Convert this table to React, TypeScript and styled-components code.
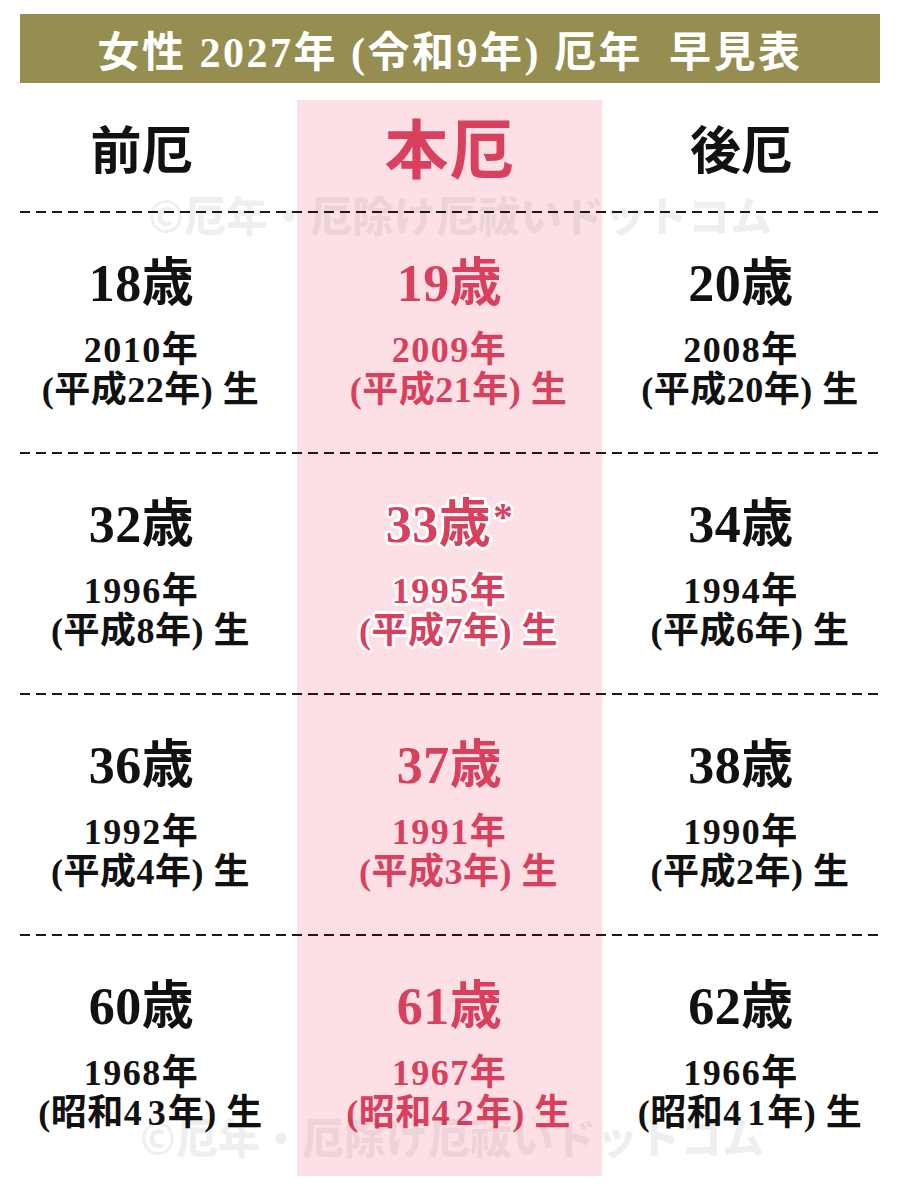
import React from "react";
import styled, {createGlobalStyle, css} from "styled-components";

const GlobalStyle = createGlobalStyle`
  body {
    margin: 0;
    background: #ffffff;
  }
`

const SERIF = `"Liberation Serif", "Noto Sans CJK JP", serif`

const RED = "#d8405e"
const PINK = "#fde0e6"

export const Page = styled.div`
  position: relative;
  width: 900px;
  height: 1200px;
  box-sizing: border-box;
  padding: 14px 20px 0;
  font-family: ${SERIF};
  color: #111111;
`

export const TitleBar = styled.div`
  height: 69px;
  background: #958e50;
  color: #ffffff;
  display: flex;
  align-items: center;
  justify-content: center;
  font-size: 42px;
  font-weight: 700;
  letter-spacing: 2.5px;
  white-space: pre;
  margin-bottom: 17px;
`

export const Table = styled.div`
  display: flex;
  flex-direction: column;
`

export const Row = styled.div<{ $height: number; $divided?: boolean }>`
  position: relative;
  display: grid;
  grid-template-columns: 277px 305px 278px;
  height: ${({$height}) => $height}px;

  ${({$divided}) => $divided && css`
    &::after {
      content: "";
      position: absolute;
      left: 0;
      right: 0;
      bottom: -1px;
      height: 2px;
      background: repeating-linear-gradient(90deg, #1a1a1a 0 10px, transparent 10px 16px);
      z-index: 2;
    }
  `}
`

export const Cell = styled.div<{ $featured?: boolean; $shift?: number; $pad?: number }>`
  display: flex;
  flex-direction: column;
  align-items: center;
  justify-content: center;
  padding-right: ${({$shift}) => $shift || 0}px;
  padding-bottom: ${({$pad}) => $pad || 0}px;
  background: ${({$featured}) => ($featured ? PINK : "transparent")};
  color: ${({$featured}) => ($featured ? RED : "#111111")};
`

export const Label = styled.div<{ $big?: boolean }>`
  font-size: ${({$big}) => ($big ? 64 : 51)}px;
  font-weight: 700;
  line-height: 1;
  letter-spacing: ${({$big}) => ($big ? 1 : 0)}px;
`

const outline = css`
  text-shadow:
    3px 0 0 #fff, -3px 0 0 #fff, 0 3px 0 #fff, 0 -3px 0 #fff,
    2px 2px 0 #fff, -2px 2px 0 #fff, 2px -2px 0 #fff, -2px -2px 0 #fff;
`

export const Age = styled.div<{ $outlined?: boolean }>`
  height: 56px;
  font-size: 52px;
  font-weight: 700;
  line-height: 56px;
  margin-bottom: 18px;
  letter-spacing: 0.5px;
  ${({$outlined}) => $outlined && outline}
`

export const Star = styled.span`
  font-size: 0.75em;
  line-height: 0;
  vertical-align: 0.3em;
  margin-left: 2px;
`

export const Line = styled.div<{ $outlined?: boolean; $era?: boolean }>`
  font-size: 36px;
  font-weight: 700;
  line-height: 40px;
  white-space: pre;
  letter-spacing: ${({$era}) => ($era ? 0.5 : 1.5)}px;
  padding-left: ${({$era}) => ($era ? 18 : 0)}px;
  ${({$outlined}) => $outlined && outline}
`

// spaced digits, as the full-width numerals of the 昭和 years
export const Spaced = styled.span`
  letter-spacing: 6px;
  margin-right: -4px;
`

export const Watermark = styled.div<{ $top: number; $left: number }>`
  position: absolute;
  top: ${({$top}) => $top}px;
  left: ${({$left}) => $left}px;
  font-family: "Noto Sans CJK JP", sans-serif;
  font-weight: 900;
  font-size: 42px;
  line-height: 44px;
  color: rgba(0, 0, 0, 0.065);
  white-space: nowrap;
  pointer-events: none;
  z-index: 1;
`

type Entry = { age: string; year: string; era: string; num: string; spaced?: boolean; star?: boolean }

const ROWS: Entry[][] = [
    [
        {age: "18歳", year: "2010年", era: "平成", num: "22"},
        {age: "19歳", year: "2009年", era: "平成", num: "21"},
        {age: "20歳", year: "2008年", era: "平成", num: "20"},
    ],
    [
        {age: "32歳", year: "1996年", era: "平成", num: "8"},
        {age: "33歳", year: "1995年", era: "平成", num: "7", star: true},
        {age: "34歳", year: "1994年", era: "平成", num: "6"},
    ],
    [
        {age: "36歳", year: "1992年", era: "平成", num: "4"},
        {age: "37歳", year: "1991年", era: "平成", num: "3"},
        {age: "38歳", year: "1990年", era: "平成", num: "2"},
    ],
    [
        {age: "60歳", year: "1968年", era: "昭和", num: "43", spaced: true},
        {age: "61歳", year: "1967年", era: "昭和", num: "42", spaced: true},
        {age: "62歳", year: "1966年", era: "昭和", num: "41", spaced: true},
    ],
]

const HEADERS = ["前厄", "本厄", "後厄"]

const App = () => {
    return (
        <>
            <GlobalStyle/>
            <Page>
                <TitleBar>女性 2027年 (令和9年) 厄年  早見表</TitleBar>

                <Table>
                    <Row $height={112} $divided>
                        {HEADERS.map((h, i) => (
                            <Cell key={h} $featured={i === 1} $shift={i === 0 ? 34 : 0} $pad={8}>
                                <Label $big={i === 1}>{h}</Label>
                            </Cell>
                        ))}
                    </Row>

                    {ROWS.map((row, r) => (
                        <Row key={r} $height={241} $divided={r < ROWS.length - 1}>
                            {row.map((e, i) => (
                                <Cell key={e.year} $featured={i === 1} $shift={i === 0 ? 34 : 0}>
                                    <Age $outlined={e.star}>
                                        {e.age}
                                        {e.star && <Star>*</Star>}
                                    </Age>
                                    <Line $outlined={e.star}>{e.year}</Line>
                                    <Line $outlined={e.star} $era>
                                        ({e.era}
                                        {e.spaced ? <Spaced>{e.num}</Spaced> : e.num}
                                        年) 生
                                    </Line>
                                </Cell>
                            ))}
                        </Row>
                    ))}
                </Table>

                {/* faint site watermark */}
                <Watermark $top={192} $left={148}>©厄年・厄除け厄祓いドットコム</Watermark>
                <Watermark $top={1114} $left={140}>©厄年・厄除け厄祓いドットコム</Watermark>
            </Page>
        </>
    );
};

export default App;
